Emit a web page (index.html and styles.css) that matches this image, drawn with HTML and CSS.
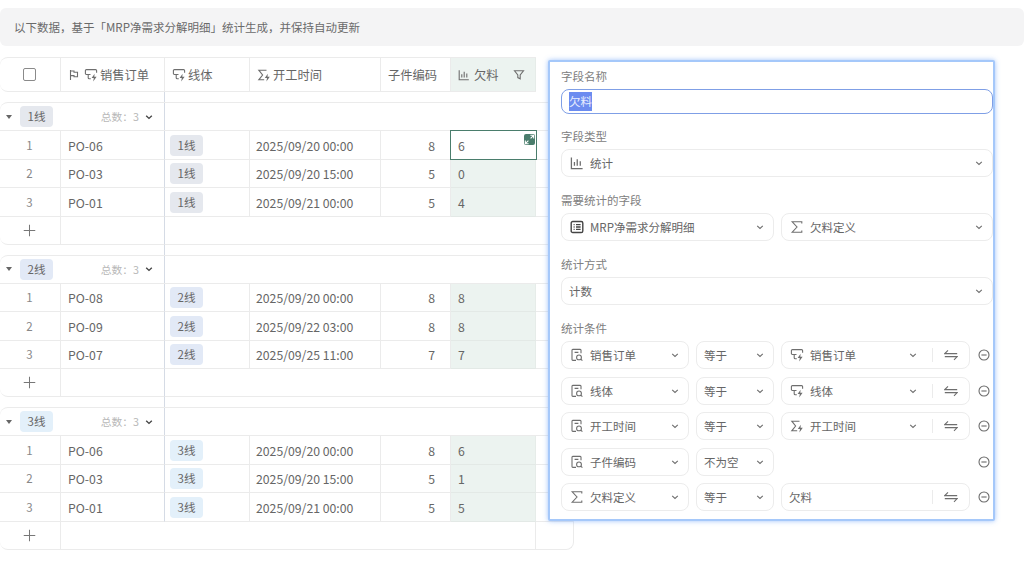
FILE: index.html
```html
<!DOCTYPE html>
<html>
  <head>
    <title>统计字段</title>
    <link rel="stylesheet" href="styles.css">
  </head>
  <body>
    <svg class="sprite" xmlns="http://www.w3.org/2000/svg">
      <symbol id="i-flag" viewBox="0 0 12 12"><path d="M2.5 1v10M2.5 2h3.5v1.2h3.5v4.6H6V6.6H2.5"/></symbol>
      <symbol id="i-link" viewBox="0 0 14 14"><path d="M6.5 6.5H2.4a1 1 0 0 1-1-1V2.6a1 1 0 0 1 1-1h9.2a1 1 0 0 1 1 1v2.2M4.2 6.5v3.2a1 1 0 0 0 1 1h1.6"/><path class="fill" d="M10.6 5.8 7.6 10h2.2l-.6 3.6 3.4-4.8h-2.3z"/></symbol>
      <symbol id="i-sigma-bolt" viewBox="0 0 14 14"><path d="M9.5 2.2H1.8L5.6 7 1.8 11.8h5.4"/><path class="fill" d="M10.8 5.8 7.8 10H10l-.6 3.6 3.4-4.8h-2.3z"/></symbol>
      <symbol id="i-sigma" viewBox="0 0 14 14"><path d="M11.8 3.4V1.8H2.2L7 7l-4.8 5.2h9.6v-1.6"/></symbol>
      <symbol id="i-chart" viewBox="0 0 12 12"><path d="M1.2 1.2v9.6h9.6M3.8 5.2v3.2M6.2 2.8v5.6M8.8 4.4v4"/></symbol>
      <symbol id="i-filter" viewBox="0 0 12 12"><path d="M1.5 1.8h9L7.2 6v3.8L4.8 8.6V6z"/></symbol>
      <symbol id="i-table" viewBox="0 0 14 14"><rect x="1.2" y="1.5" width="11.6" height="11" rx="1.6"/><path d="M3.6 4.6h1M6 4.6h4.6M3.6 7h1M6 7h4.6M3.6 9.4h1M6 9.4h4.6"/></symbol>
      <symbol id="i-doc" viewBox="0 0 14 14"><path d="M6 12.4H2.8a.8.8 0 0 1-.8-.8V2.2a.8.8 0 0 1 .8-.8h7.4a.8.8 0 0 1 .8.8v3M4.6 4.4h3.8"/><circle cx="9" cy="9.4" r="2.4"/><path d="m10.8 11.2 1.6 1.5"/></symbol>
      <symbol id="i-swap" viewBox="0 0 14 14"><path d="M13.2 5.6H.8L4 2.4M.8 8.6h12.4L10 11.8"/></symbol>
      <symbol id="i-minus" viewBox="0 0 12 12"><circle cx="6" cy="6" r="5"/><path d="M3.4 6h5.2"/></symbol>
      <symbol id="i-chevron" viewBox="0 0 10 10"><path d="m2.2 3.8 2.8 2.6 2.8-2.6"/></symbol>
      <symbol id="i-plus" viewBox="0 0 14 14"><path d="M7 .8v12.4M.8 7h12.4"/></symbol>
    </svg>

    <div class="notice">以下数据，基于「MRP净需求分解明细」统计生成，并保持自动更新</div>

    <div class="sheet">
      <div class="row head-row">
        <div class="cell center"><span class="checkbox"></span></div>
        <div class="cell head-cell"><svg class="icon flag"><use href="#i-flag"/></svg><svg class="icon"><use href="#i-link"/></svg>销售订单</div>
        <div class="cell head-cell"><svg class="icon"><use href="#i-link"/></svg>线体</div>
        <div class="cell head-cell"><svg class="icon"><use href="#i-sigma-bolt"/></svg>开工时间</div>
        <div class="cell head-cell">子件编码</div>
        <div class="cell head-cell stat"><svg class="icon small"><use href="#i-chart"/></svg>欠料<svg class="icon small funnel"><use href="#i-filter"/></svg></div>
      </div>

      <div class="group-gap"></div>
      <div class="group">
        <div class="group-head">
          <div class="group-title"><span class="caret"></span><span class="tag line1">1线</span><span class="total">总数：3<svg class="icon tiny dark"><use href="#i-chevron"/></svg></span></div>
        </div>
        <div class="row rec">
          <div class="cell center num">1</div><div class="cell">PO-06</div><div class="cell"><span class="tag line1">1线</span></div><div class="cell date">2025/09/20 00:00</div><div class="cell right">8</div>
          <div class="cell selected">6<span class="expand"><svg viewBox="0 0 10 10"><path d="M5.8 1.2h3v3M8.8 1.2 6 4M4.2 8.8h-3v-3M1.2 8.8 4 6"/></svg></span></div><div class="cell end"></div>
        </div>
        <div class="row rec">
          <div class="cell center num">2</div><div class="cell">PO-03</div><div class="cell"><span class="tag line1">1线</span></div><div class="cell date">2025/09/20 15:00</div><div class="cell right">5</div><div class="cell stat">0</div><div class="cell end"></div>
        </div>
        <div class="row rec">
          <div class="cell center num">3</div><div class="cell">PO-01</div><div class="cell"><span class="tag line1">1线</span></div><div class="cell date">2025/09/21 00:00</div><div class="cell right">5</div><div class="cell stat">4</div><div class="cell end"></div>
        </div>
        <div class="add-row"><div class="cell center"><svg class="icon plus"><use href="#i-plus"/></svg></div><div class="cell"></div><div class="cell"></div></div>
      </div>

      <div class="group-gap"></div>
      <div class="group">
        <div class="group-head">
          <div class="group-title"><span class="caret"></span><span class="tag line2">2线</span><span class="total">总数：3<svg class="icon tiny dark"><use href="#i-chevron"/></svg></span></div>
        </div>
        <div class="row rec">
          <div class="cell center num">1</div><div class="cell">PO-08</div><div class="cell"><span class="tag line2">2线</span></div><div class="cell date">2025/09/20 00:00</div><div class="cell right">8</div><div class="cell stat">8</div><div class="cell end"></div>
        </div>
        <div class="row rec">
          <div class="cell center num">2</div><div class="cell">PO-09</div><div class="cell"><span class="tag line2">2线</span></div><div class="cell date">2025/09/22 03:00</div><div class="cell right">8</div><div class="cell stat">8</div><div class="cell end"></div>
        </div>
        <div class="row rec">
          <div class="cell center num">3</div><div class="cell">PO-07</div><div class="cell"><span class="tag line2">2线</span></div><div class="cell date">2025/09/25 11:00</div><div class="cell right">7</div><div class="cell stat">7</div><div class="cell end"></div>
        </div>
        <div class="add-row"><div class="cell center"><svg class="icon plus"><use href="#i-plus"/></svg></div><div class="cell"></div><div class="cell"></div></div>
      </div>

      <div class="group-gap"></div>
      <div class="group">
        <div class="group-head">
          <div class="group-title"><span class="caret"></span><span class="tag line3">3线</span><span class="total">总数：3<svg class="icon tiny dark"><use href="#i-chevron"/></svg></span></div>
        </div>
        <div class="row rec">
          <div class="cell center num">1</div><div class="cell">PO-06</div><div class="cell"><span class="tag line3">3线</span></div><div class="cell date">2025/09/20 00:00</div><div class="cell right">8</div><div class="cell stat">6</div><div class="cell end"></div>
        </div>
        <div class="row rec">
          <div class="cell center num">2</div><div class="cell">PO-03</div><div class="cell"><span class="tag line3">3线</span></div><div class="cell date">2025/09/20 15:00</div><div class="cell right">5</div><div class="cell stat">1</div><div class="cell end"></div>
        </div>
        <div class="row rec">
          <div class="cell center num">3</div><div class="cell">PO-01</div><div class="cell"><span class="tag line3">3线</span></div><div class="cell date">2025/09/21 00:00</div><div class="cell right">5</div><div class="cell stat">5</div><div class="cell end"></div>
        </div>
        <div class="add-row last"><div class="cell center"><svg class="icon plus"><use href="#i-plus"/></svg></div><div class="cell"></div><div class="cell"></div></div>
      </div>
    </div>

    <div class="panel">
      <div class="field name-field">
        <label>字段名称</label>
        <div class="control name-input"><span class="picked">欠料</span></div>
      </div>
      <div class="field">
        <label>字段类型</label>
        <div class="control"><svg class="icon"><use href="#i-chart"/></svg><span class="grow">统计</span><svg class="icon tiny"><use href="#i-chevron"/></svg></div>
      </div>
      <div class="field">
        <label>需要统计的字段</label>
        <div class="pair">
          <div class="control"><svg class="icon dark"><use href="#i-table"/></svg><span class="grow">MRP净需求分解明细</span><svg class="icon tiny"><use href="#i-chevron"/></svg></div>
          <div class="control"><svg class="icon"><use href="#i-sigma"/></svg><span class="grow">欠料定义</span><svg class="icon tiny"><use href="#i-chevron"/></svg></div>
        </div>
      </div>
      <div class="field">
        <label>统计方式</label>
        <div class="control plain"><span class="grow">计数</span><svg class="icon tiny"><use href="#i-chevron"/></svg></div>
      </div>
      <div class="field">
        <label>统计条件</label>
        <div class="conditions">
          <div class="cond">
            <div class="control"><svg class="icon"><use href="#i-doc"/></svg><span class="grow">销售订单</span><svg class="icon tiny"><use href="#i-chevron"/></svg></div>
            <div class="control plain"><span class="grow">等于</span><svg class="icon tiny"><use href="#i-chevron"/></svg></div>
            <div class="control"><svg class="icon"><use href="#i-link"/></svg><span class="grow">销售订单</span><svg class="icon tiny"><use href="#i-chevron"/></svg><span class="swap"><svg class="icon"><use href="#i-swap"/></svg></span></div>
            <svg class="icon minus"><use href="#i-minus"/></svg>
          </div>
          <div class="cond">
            <div class="control"><svg class="icon"><use href="#i-doc"/></svg><span class="grow">线体</span><svg class="icon tiny"><use href="#i-chevron"/></svg></div>
            <div class="control plain"><span class="grow">等于</span><svg class="icon tiny"><use href="#i-chevron"/></svg></div>
            <div class="control"><svg class="icon"><use href="#i-link"/></svg><span class="grow">线体</span><svg class="icon tiny"><use href="#i-chevron"/></svg><span class="swap"><svg class="icon"><use href="#i-swap"/></svg></span></div>
            <svg class="icon minus"><use href="#i-minus"/></svg>
          </div>
          <div class="cond">
            <div class="control"><svg class="icon"><use href="#i-doc"/></svg><span class="grow">开工时间</span><svg class="icon tiny"><use href="#i-chevron"/></svg></div>
            <div class="control plain"><span class="grow">等于</span><svg class="icon tiny"><use href="#i-chevron"/></svg></div>
            <div class="control"><svg class="icon"><use href="#i-sigma-bolt"/></svg><span class="grow">开工时间</span><svg class="icon tiny"><use href="#i-chevron"/></svg><span class="swap"><svg class="icon"><use href="#i-swap"/></svg></span></div>
            <svg class="icon minus"><use href="#i-minus"/></svg>
          </div>
          <div class="cond">
            <div class="control"><svg class="icon"><use href="#i-doc"/></svg><span class="grow">子件编码</span><svg class="icon tiny"><use href="#i-chevron"/></svg></div>
            <div class="control plain"><span class="grow">不为空</span><svg class="icon tiny"><use href="#i-chevron"/></svg></div>
            <div></div>
            <svg class="icon minus"><use href="#i-minus"/></svg>
          </div>
          <div class="cond">
            <div class="control"><svg class="icon"><use href="#i-sigma"/></svg><span class="grow">欠料定义</span><svg class="icon tiny"><use href="#i-chevron"/></svg></div>
            <div class="control plain"><span class="grow">等于</span><svg class="icon tiny"><use href="#i-chevron"/></svg></div>
            <div class="control plain"><span class="grow">欠料</span><span class="swap"><svg class="icon"><use href="#i-swap"/></svg></span></div>
            <svg class="icon minus"><use href="#i-minus"/></svg>
          </div>
        </div>
      </div>
    </div>
  </body>
</html>
```

FILE: styles.css
```css
body {
  margin: 0;
  height: 575px;
  overflow: hidden;
  position: relative;
  background-color: #fff;
  color: #666;
  font-family: "Noto Sans CJK SC", "Noto Sans", sans-serif;
  font-size: 11.5px;
}

.sprite {
  display: none;
}

.icon {
  width: 14px;
  height: 14px;
  flex-shrink: 0;
  fill: none;
  stroke: #6e6e6e;
  stroke-width: 1.1;
}

.fill {
  fill: #6e6e6e;
  stroke: none;
}

.icon.small {
  width: 12px;
  height: 12px;
}

.icon.tiny {
  width: 10px;
  height: 10px;
}

.icon.dark {
  stroke: #444;
  stroke-width: 1.4;
}

.notice {
  margin-top: 8px;
  height: 38px;
  line-height: 38px;
  padding-left: 14px;
  background-color: #f4f4f5;
  border-radius: 6px;
  color: #6a6a6a;
}

.sheet {
  margin-top: 11px;
  width: 574px;
}

.row {
  display: grid;
  grid-template-columns: 61px 104px 85px 131px 70px 85px 38px;
}

.cell {
  display: flex;
  align-items: center;
  padding-left: 7px;
  border-right: 1px solid #ebebeb;
  border-bottom: 1px solid #ebebeb;
  box-sizing: border-box;
  min-width: 0;
}

.center {
  padding: 0 1px 0 0;
  justify-content: center;
}

.right {
  padding: 0 15px 0 0;
  justify-content: flex-end;
}

.num {
  color: #888;
}

.head-row {
  height: 35px;
  width: 536px;
  grid-template-columns: 61px 104px 85px 131px 70px 85px;
  border: 1px solid #ebebeb;
  border-left: none;
  border-right: none;
  border-radius: 8px 0 0 8px;
  box-sizing: border-box;
}

.head-row .cell {
  border-bottom: none;
  font-size: 12.25px;
  gap: 2px;
}

.head-cell.stat {
  background-color: #ecf3f0;
  padding-right: 8px;
}

.flag {
  width: 12px;
  height: 12px;
  margin-right: 2px;
}

.funnel {
  margin-left: auto;
}

.stat .icon.small {
  margin-right: 2px;
}

.stat .funnel {
  margin-right: 0;
}

.checkbox {
  width: 11px;
  height: 11px;
  border: 1px solid #8a8a8a;
  border-radius: 2px;
}

.group-gap {
  height: 10px;
  width: 165px;
  border-right: 1px solid #d5dbe5;
  box-sizing: border-box;
}

.group {
  width: 574px;
}

.group-head {
  height: 29px;
  display: flex;
  border: 1px solid #ebebeb;
  border-left: none;
  border-radius: 8px 8px 0 0;
  box-sizing: border-box;
}

.group-title {
  width: 165px;
  display: flex;
  align-items: center;
  padding-left: 6px;
  box-sizing: border-box;
  border-right: 1px solid #d5dbe5;
}

.caret {
  width: 0;
  height: 0;
  border-left: 3px solid transparent;
  border-right: 3px solid transparent;
  border-top: 4px solid #666;
  margin-right: 8px;
}

.total {
  margin-left: auto;
  margin-right: 10px;
  display: flex;
  align-items: center;
  gap: 5px;
  color: #b8b8b8;
  font-size: 10.75px;
}

.tag {
  width: 33px;
  height: 21px;
  line-height: 21px;
  text-align: center;
  border-radius: 4px;
  font-size: 11.5px;
  color: #666;
}

.line1 {
  background-color: #e5e8ee;
}

.line2 {
  background-color: #e2e9f6;
}

.line3 {
  background-color: #e3f0fa;
}

.rec {
  height: 28.5px;
  font-size: 12.25px;
}

.rec .cell {
  padding-top: 2px;
}

.rec .num {
  padding-top: 0;
  font-size: 11.5px;
}

.rec .cell:nth-child(2) {
  border-right-color: #d5dbe5;
}

.rec .cell:nth-child(3) {
  padding-top: 1px;
  padding-left: 5px;
}

.rec .date {
  padding-left: 6px;
}

.cell.stat {
  background-color: #ecf3f0;
  border-right-color: #e6ece9;
  border-bottom-color: #e3e9e6;
}

.selected {
  position: relative;
  margin: -1px -1px 0 -1px;
  padding-left: 7px;
  border: 1.5px solid #4a7d6c;
}

/* corner button on the active cell */
.expand {
  position: absolute;
  top: 2.5px;
  right: 1.5px;
  width: 11px;
  height: 11px;
  background-color: #4a7d6c;
  border-radius: 2px;
}

.expand svg {
  display: block;
  width: 11px;
  height: 11px;
  fill: none;
  stroke: #fff;
  stroke-width: 1;
}

.add-row {
  height: 28px;
  display: grid;
  grid-template-columns: 61px 104px 409px;
}

.add-row .cell:first-child {
  border-radius: 0 0 0 8px;
}

.add-row .cell:nth-child(2) {
  border-right-color: #d5dbe5;
}

.add-row .cell:last-child {
  border-radius: 0 0 8px 0;
}

.add-row.last {
  grid-template-columns: 61px 475px 38px;
}

.add-row.last .cell:nth-child(2) {
  border-right-color: #ebebeb;
}

.plus {
  width: 13px;
  height: 13px;
  stroke: #777;
}

/* popup over the sheet */
.panel {
  position: absolute;
  left: 548px;
  top: 60px;
  width: 447px;
  height: 461px;
  box-sizing: border-box;
  padding: 7px 0 0 11px;
  background-color: #fff;
  border: 2px solid #a5c8fa;
  border-radius: 2px;
  box-shadow: 0 0 5px rgba(120, 170, 250, 0.7);
}

.field {
  margin-bottom: 16px;
}

.name-field {
  margin-bottom: 15px;
}

label {
  display: block;
  height: 14px;
  line-height: 14px;
  margin-bottom: 6px;
  color: #808080;
}

.control {
  height: 28px;
  box-sizing: border-box;
  display: flex;
  align-items: center;
  gap: 6px;
  padding: 0 8px 0 8px;
  background-color: #fff;
  border: 1px solid #ececec;
  border-radius: 8px;
}

.control.plain {
  padding-left: 7px;
}

.grow {
  flex: 1;
  min-width: 0;
  white-space: nowrap;
}

.name-input {
  height: 25px;
  padding-left: 7px;
  border-color: #7f9fe6;
}

.picked {
  background-color: #6c8cf0;
  color: #e9eeff;
  line-height: 19px;
}

.pair {
  display: grid;
  grid-template-columns: 213px 1fr;
  gap: 7px;
}

.conditions {
  display: flex;
  flex-direction: column;
  gap: 7.5px;
}

.cond {
  display: grid;
  grid-template-columns: 128px 78px 189px 12px;
  column-gap: 7px;
  align-items: center;
}

.swap {
  display: flex;
  align-items: center;
  height: 14px;
  margin-right: 3px;
  margin-left: 8px;
  padding-left: 11px;
  border-left: 1px solid #ebebeb;
}

.minus {
  width: 12px;
  height: 12px;
  margin-left: 1px;
  stroke: #6b6b6b;
}
```
